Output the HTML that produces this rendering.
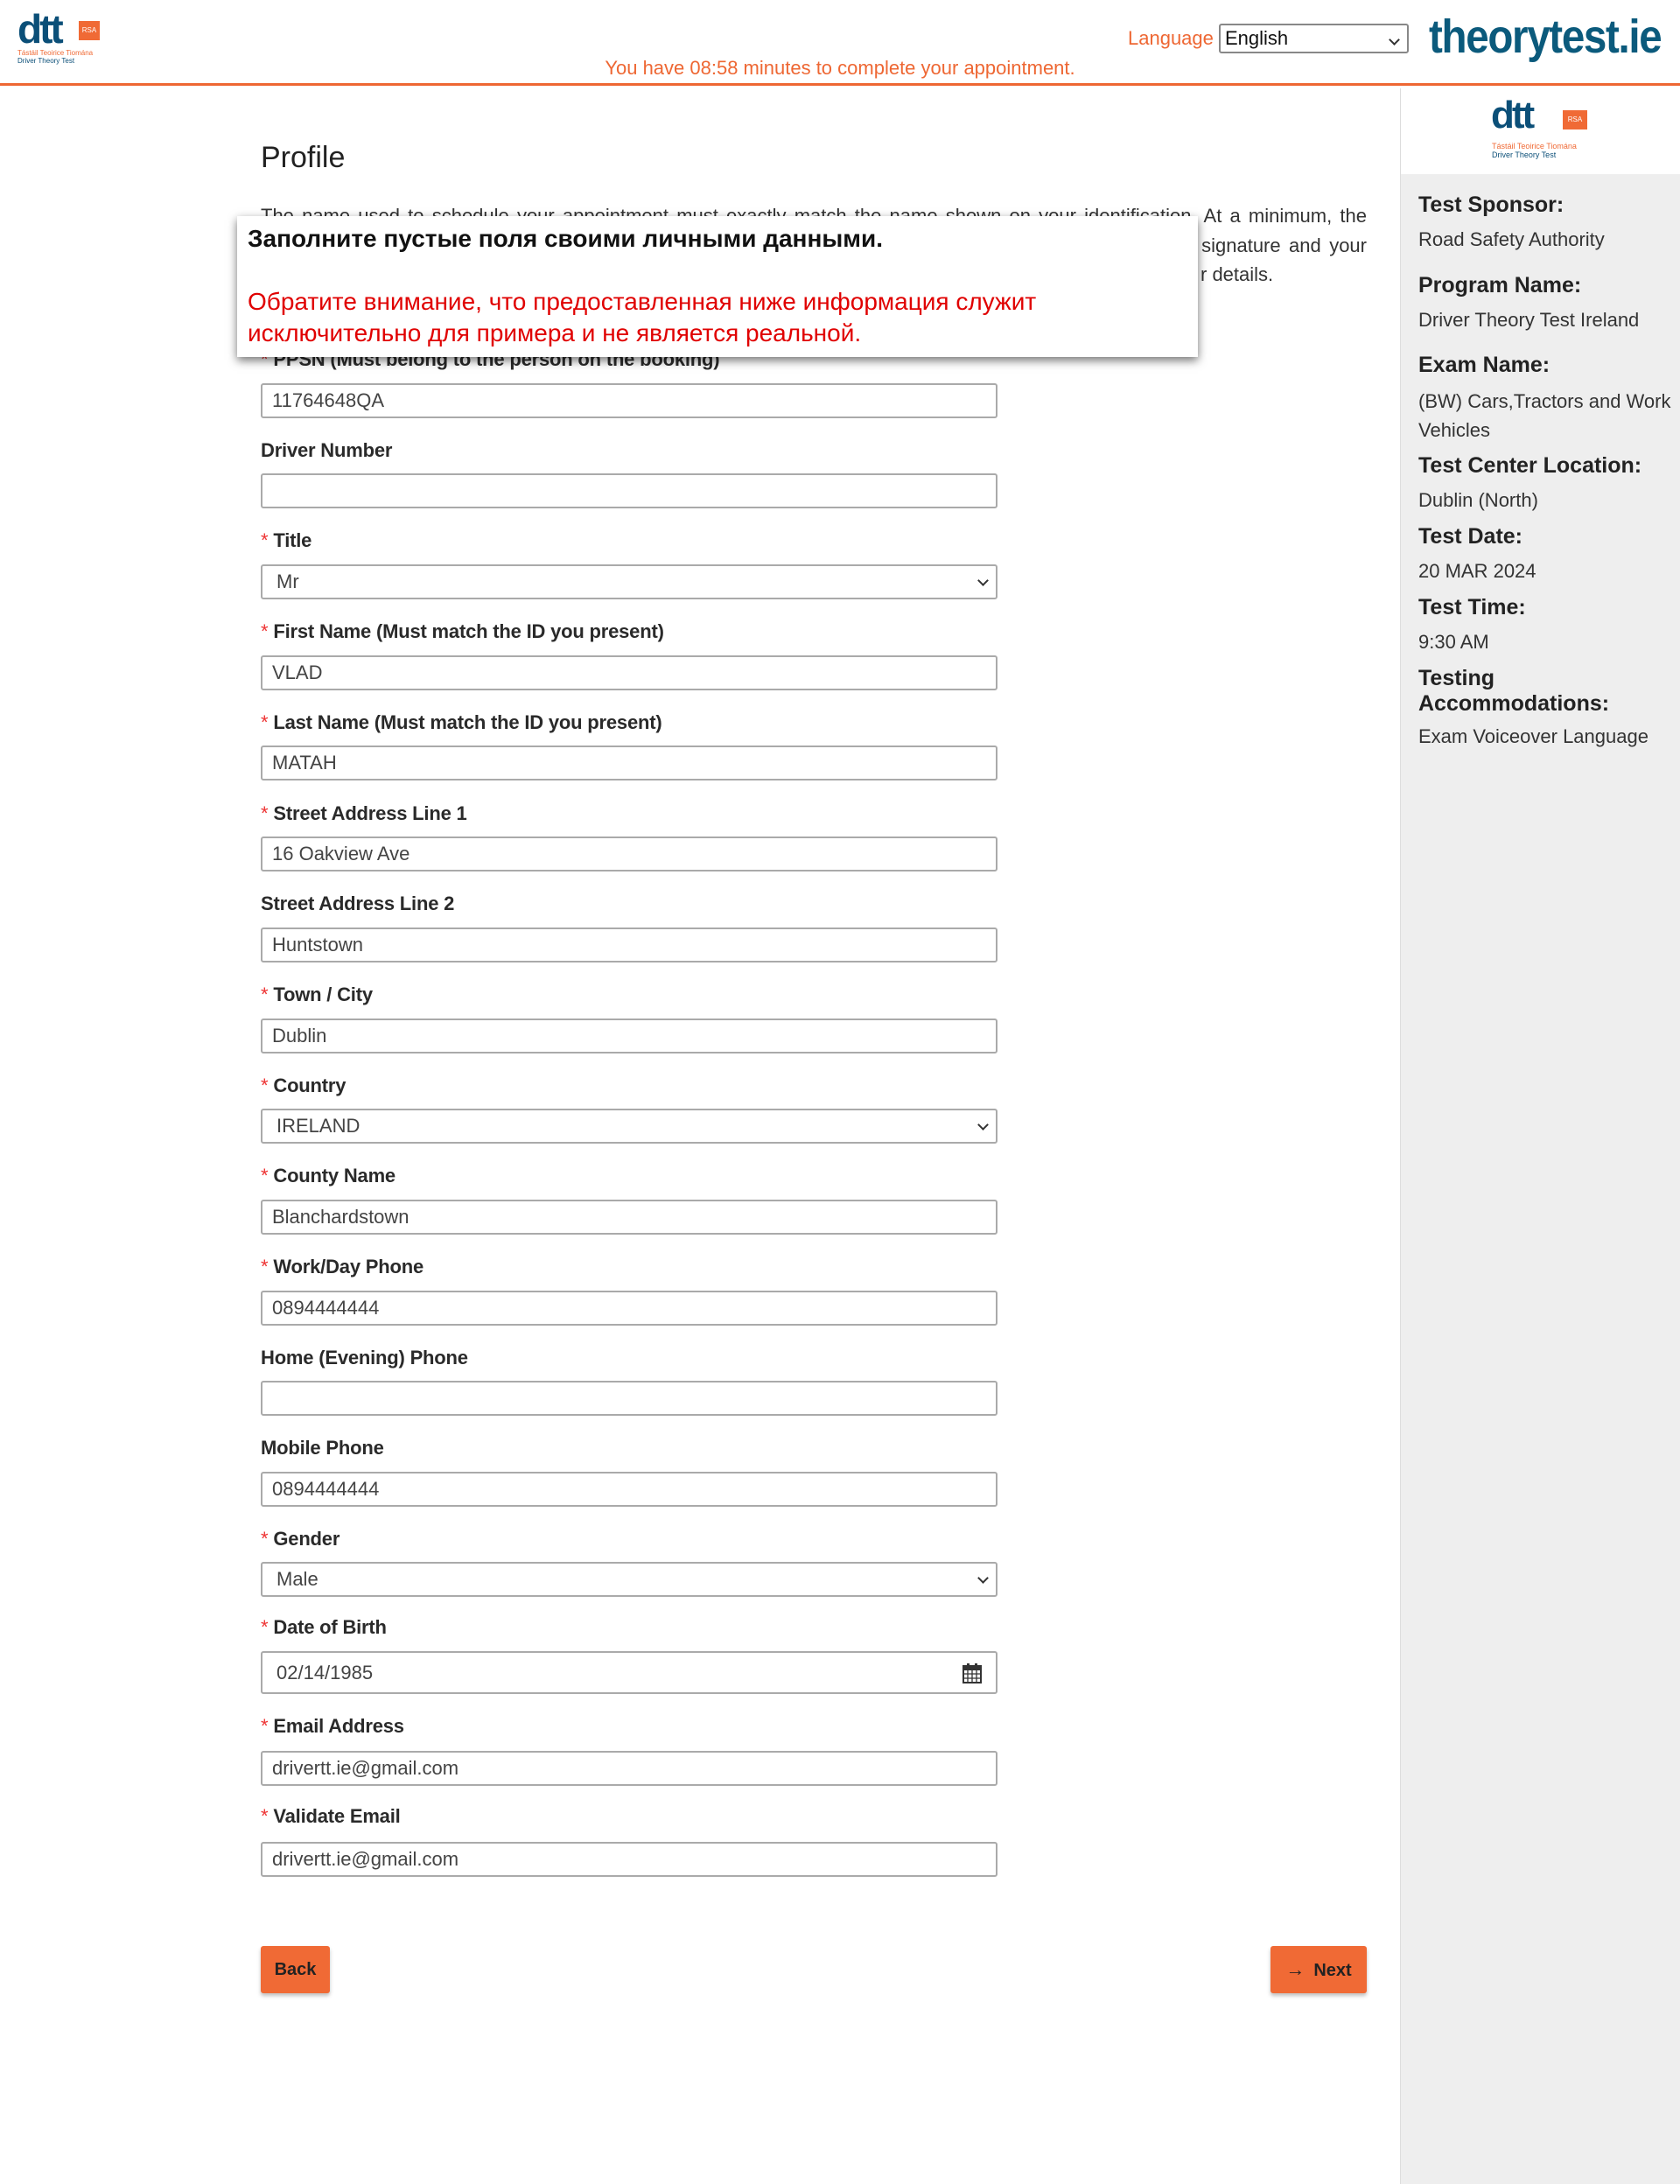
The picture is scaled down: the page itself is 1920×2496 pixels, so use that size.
<!DOCTYPE html>
<html><head><meta charset="utf-8">
<style>
*{box-sizing:border-box;margin:0;padding:0}
body{width:1920px;height:2496px;position:relative;background:#fff;font-family:"Liberation Sans","DejaVu Sans",sans-serif;overflow:hidden;color:#222}
.abs{position:absolute}
.hdr{left:0;top:0;width:1920px;height:98px;border-bottom:3px solid #ee6733}
.lbl{position:absolute;left:298px;font-size:22px;font-weight:bold;color:#2a2a2a;line-height:28px;height:28px;letter-spacing:-0.2px}
.lbl b{color:#e33;font-weight:normal;margin-right:6px}
.inp{position:absolute;left:298px;width:842px;height:40px;border:2px solid #aaa;border-radius:3px;font-size:22px;color:#444;padding-left:11px;line-height:36px;background:#fff}
.sel:after{content:"";position:absolute;right:10px;top:12px;width:7px;height:7px;border-right:2px solid #333;border-bottom:2px solid #333;transform:rotate(45deg)}
.sb{position:absolute;left:1621px;font-size:22px;color:#333;line-height:30px}
.sb.h{font-weight:bold;font-size:25px;color:#222}
.btn{position:absolute;top:2224px;height:54px;background:#f06a35;border-radius:3px;box-shadow:0 3px 4px rgba(0,0,0,.25);font-size:20px;font-weight:bold;color:#222;line-height:54px;text-align:center}
</style></head><body>
<div class="abs hdr"></div>
<div class="abs" style="left:20px;top:10px;font-size:46px;font-weight:bold;color:#0b4f78;letter-spacing:-3px;line-height:46px">dtt</div>
<div class="abs" style="left:90px;top:24px;width:24px;height:22px;background:#f06a35;color:#fff;font-size:8px;line-height:22px;text-align:center">RSA</div>
<div class="abs" style="left:20px;top:56px;font-size:8px;color:#f06a35;line-height:9px">Tástáil Teoirice Tiomána</div>
<div class="abs" style="left:20px;top:65px;font-size:8px;color:#0b4f78;line-height:9px">Driver Theory Test</div>
<div class="abs" style="left:1289px;top:30px;font-size:22px;color:#ee6733;line-height:28px">Language</div>
<div class="abs sel" style="left:1393px;top:27px;width:217px;height:34px;border:2px solid #888;border-radius:3px;font-size:22px;line-height:30px;padding-left:5px;color:#111">English</div>
<div class="abs" style="left:1633px;top:12px;font-size:54px;font-weight:bold;color:#0b5a7c;line-height:60px;letter-spacing:-1.5px;transform:scaleX(0.88);transform-origin:left">theorytest.ie</div>
<div class="abs" style="left:0;width:1920px;top:64px;text-align:center;font-size:22px;color:#ee6733;line-height:28px">You have 08:58 minutes to complete your appointment.</div>

<div class="abs" style="left:1600px;top:101px;width:320px;height:2395px;background:#eee;border-left:1px solid #ddd"></div>
<div class="abs" style="left:1601px;top:101px;width:319px;height:98px;background:#fff"></div>
<div class="abs" style="left:1704px;top:110px;font-size:44px;font-weight:bold;color:#0b4f78;letter-spacing:-3px;line-height:44px">dtt</div>
<div class="abs" style="left:1786px;top:126px;width:28px;height:22px;background:#f06a35;color:#fff;font-size:8px;line-height:22px;text-align:center">RSA</div>
<div class="abs" style="left:1705px;top:162px;font-size:9px;color:#f06a35;line-height:10px">Tástáil Teoirice Tiomána</div>
<div class="abs" style="left:1705px;top:172px;font-size:9px;color:#0b4f78;line-height:10px">Driver Theory Test</div>
<div class="sb h" style="top:219px">Test Sponsor:</div>
<div class="sb" style="top:259px">Road Safety Authority</div>
<div class="sb h" style="top:311px">Program Name:</div>
<div class="sb" style="top:351px">Driver Theory Test Ireland</div>
<div class="sb h" style="top:402px">Exam Name:</div>
<div class="sb" style="top:442px;line-height:33px;width:290px">(BW) Cars,Tractors and Work Vehicles</div>
<div class="sb h" style="top:517px">Test Center Location:</div>
<div class="sb" style="top:557px">Dublin (North)</div>
<div class="sb h" style="top:598px">Test Date:</div>
<div class="sb" style="top:638px">20 MAR 2024</div>
<div class="sb h" style="top:679px">Test Time:</div>
<div class="sb" style="top:719px">9:30 AM</div>
<div class="sb h" style="top:761px;line-height:29px">Testing<br>Accommodations:</div>
<div class="sb" style="top:827px">Exam Voiceover Language</div>

<div class="abs" style="left:298px;top:160px;font-size:34px;color:#222;line-height:40px">Profile</div>
<div class="abs" style="left:298px;top:230px;width:1264px;font-size:22px;color:#333;line-height:34px;text-align:justify;text-align-last:justify">The name used to schedule your appointment must exactly match the name shown on your identification. At a minimum, the name must include your first and last names exactly as they appear on your identification, including your signature and your</div>
<div class="abs" style="left:1372px;top:297px;font-size:22px;color:#333;line-height:34px">r details.</div>

<div class="lbl" style="top:397px"><b>*</b>PPSN (Must belong to the person on the booking)</div>
<div class="inp" style="top:438px">11764648QA</div>
<div class="lbl" style="top:501px">Driver Number</div>
<div class="inp" style="top:541px"></div>
<div class="lbl" style="top:604px"><b>*</b>Title</div>
<div class="inp sel" style="top:645px;padding-left:16px">Mr</div>
<div class="lbl" style="top:708px"><b>*</b>First Name (Must match the ID you present)</div>
<div class="inp" style="top:749px">VLAD</div>
<div class="lbl" style="top:812px"><b>*</b>Last Name (Must match the ID you present)</div>
<div class="inp" style="top:852px">MATAH</div>
<div class="lbl" style="top:916px"><b>*</b>Street Address Line 1</div>
<div class="inp" style="top:956px">16 Oakview Ave</div>
<div class="lbl" style="top:1019px">Street Address Line 2</div>
<div class="inp" style="top:1060px">Huntstown</div>
<div class="lbl" style="top:1123px"><b>*</b>Town / City</div>
<div class="inp" style="top:1164px">Dublin</div>
<div class="lbl" style="top:1227px"><b>*</b>Country</div>
<div class="inp sel" style="top:1267px;padding-left:16px">IRELAND</div>
<div class="lbl" style="top:1330px"><b>*</b>County Name</div>
<div class="inp" style="top:1371px">Blanchardstown</div>
<div class="lbl" style="top:1434px"><b>*</b>Work/Day Phone</div>
<div class="inp" style="top:1475px">0894444444</div>
<div class="lbl" style="top:1538px">Home (Evening) Phone</div>
<div class="inp" style="top:1578px"></div>
<div class="lbl" style="top:1641px">Mobile Phone</div>
<div class="inp" style="top:1682px">0894444444</div>
<div class="lbl" style="top:1745px"><b>*</b>Gender</div>
<div class="inp sel" style="top:1785px;padding-left:16px">Male</div>
<div class="lbl" style="top:1846px"><b>*</b>Date of Birth</div>
<div class="inp" style="top:1887px;height:49px;line-height:45px;padding-left:16px">02/14/1985
 <svg style="position:absolute;right:16px;top:11px" width="22" height="24" viewBox="0 0 22 24"><rect x="1" y="4" width="20" height="19" fill="#fff" stroke="#333" stroke-width="2"/><rect x="1" y="4" width="20" height="5" fill="#333"/><rect x="5" y="1" width="3" height="6" fill="#333"/><rect x="14" y="1" width="3" height="6" fill="#333"/><path d="M1 13H21M1 18H21M6 9V23M11 9V23M16 9V23" stroke="#333" stroke-width="1.3"/></svg></div>
<div class="lbl" style="top:1959px"><b>*</b>Email Address</div>
<div class="inp" style="top:2001px">drivertt.ie@gmail.com</div>
<div class="lbl" style="top:2062px"><b>*</b>Validate Email</div>
<div class="inp" style="top:2105px">drivertt.ie@gmail.com</div>

<div class="btn" style="left:298px;width:79px">Back</div>
<div class="btn" style="left:1452px;width:110px"><span style="font-size:22px;margin-right:10px">&#8594;</span>Next</div>

<div class="abs" style="left:271px;top:247px;width:1098px;height:161px;background:#fff;box-shadow:0 4px 10px rgba(0,0,0,.55);padding:8px 12px">
 <div style="font-size:28px;font-weight:bold;color:#111;line-height:36px">Заполните пустые поля своими личными данными.</div>
 <div style="font-size:28px;color:#e00000;line-height:36px;margin-top:36px">Обратите внимание, что предоставленная ниже информация служит исключительно для примера и не является реальной.</div>
</div>
</body></html>
